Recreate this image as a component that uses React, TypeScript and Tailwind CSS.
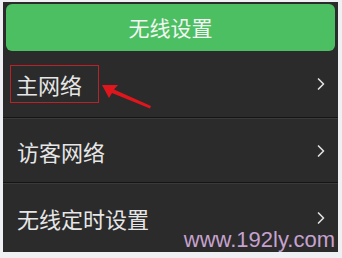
import { ChevronRight } from "lucide-react";

const font = { fontFamily: '"Noto Sans CJK SC", "Noto Sans", sans-serif' };

function Divider() {
  return (
    <div className="flex flex-col">
      <div className="h-[1px] bg-[#151515]" />
      <div className="h-[1px] bg-[#3a3a3a]" />
    </div>
  );
}

function Row({ label, height, boxed }: { label: string; height: string; boxed?: boolean }) {
  return (
    <div className={`flex items-center justify-between pl-[14px] pr-[7px] ${height}`}>
      {boxed ? (
        <div className="flex h-[38px] w-[89px] items-center border-[1.5px] border-[#b8232a] pl-[5px] -ml-[7px]">
          <span className="text-[22px] leading-none text-[#e6e6e6]">{label}</span>
        </div>
      ) : (
        <span className="text-[22px] leading-none text-[#e6e6e6]">{label}</span>
      )}
      <ChevronRight className="h-[20px] w-[20px] text-[#e0e0e0]" strokeWidth={2} />
    </div>
  );
}

export default function App() {
  return (
    <div className="h-[258px] w-[342px] bg-[#eef0f4] pb-[6px] pl-[3px] pr-[4px] pt-[2px]" style={font}>
      <div className="relative flex h-full flex-col bg-[#2b2b2b]">
        <div className="mx-[3px] mt-[2px] flex h-[47px] items-center justify-center rounded-[6px] bg-[#4cbf63]">
          <span className="text-[21px] leading-none text-[#f2f7f2]">无线设置</span>
        </div>
        <Row label="主网络" height="h-[66px]" boxed />
        <Divider />
        <Row label="访客网络" height="h-[63px]" />
        <Divider />
        <Row label="无线定时设置" height="flex-1" />
        <svg className="absolute left-0 top-0" width="335" height="250" viewBox="0 0 335 250">
          <polygon points="99,83 115,83 111,87.5 148,104 147,106.5 109,91 106,96" fill="#e0161c" />
        </svg>
        <span
          className="absolute bottom-[1px] right-[3px] text-[22px] leading-none text-[#c6a2cf]"
          style={{ fontFamily: '"Liberation Sans", Arial, sans-serif' }}
        >
          www.192ly.com
        </span>
      </div>
    </div>
  );
}
